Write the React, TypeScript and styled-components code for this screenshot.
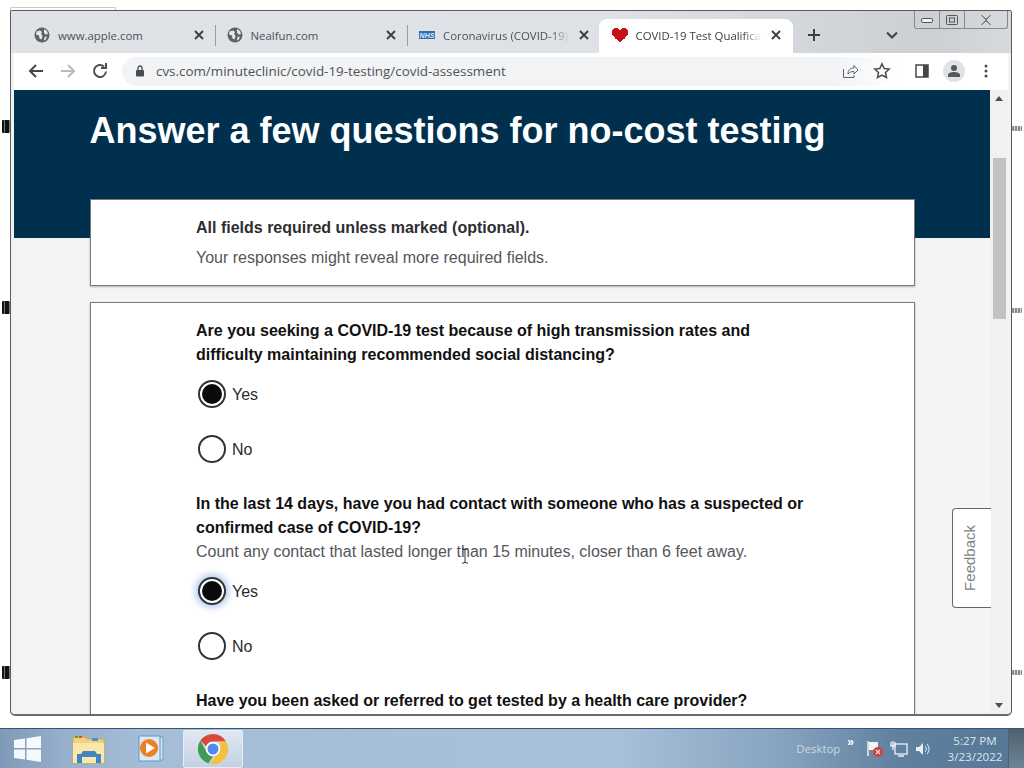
import React from "react";
import styled, { createGlobalStyle } from "styled-components";

const Global = createGlobalStyle`
  html, body { margin: 0; padding: 0; background: #fff; overflow: hidden; }
  #root { width: 1024px; height: 768px; }
`;

const Desktop = styled.div`
  position: relative; width: 1024px; height: 768px; display: flex; flex-direction: column;
  background: #fff; overflow: hidden; font-family: "Liberation Sans", Arial, sans-serif;
`;
const BrowserWindow = styled.div`
  position: relative; margin: 10px 0 0 10px; width: 1002px; height: 706px; box-sizing: border-box;
  display: flex; flex-direction: column; background: #f0f1f3;
  border: 1px solid #5a5a5c; border-bottom: 2px solid #6a6a6c; border-radius: 2px 3px 5px 5px; overflow: hidden;
`;
const GhostTab = styled.div`
  position: absolute; left: 10px; top: 7px; width: 106px; height: 4px; box-sizing: border-box;
  border: 1px solid #c8c8c8; border-bottom: 0; border-radius: 2px 2px 0 0;
`;
const TabStrip = styled.div`
  height: 42px; flex: none; display: flex; align-items: flex-end; padding-left: 12px;
  background: linear-gradient(90deg, #dfe2e7 0%, #dee1e6 60%, #ccd0d5 92%, #d6d9dd 100%);
`;
const Tab = styled.div<{ $active?: boolean; $sep?: boolean }>`
  position: relative; width: ${p => (p.$active ? 194.5 : 192.5)}px; height: 34px; box-sizing: border-box; flex: none;
  display: flex; align-items: center; gap: 8px; padding: 0 11px 2px ${p => (p.$active ? 13 : 11)}px;
  margin-left: ${p => (p.$active ? -2 : 0)}px;
  font-family: "Open Sans", sans-serif; font-size: 11.4px; color: ${p => (p.$active ? "#3c4043" : "#4f5256")};
  background: ${p => (p.$active ? "#fff" : "transparent")};
  border-radius: 8px 8px 0 0;
  &::after {
    content: ""; display: ${p => (p.$sep ? "block" : "none")};
    position: absolute; right: 0; top: 6px; height: 21px; width: 1px; background: #9a9da1;
  }
`;
const TabTitle = styled.span<{ $fade?: boolean }>`
  flex: 1; min-width: 0; overflow: hidden; white-space: nowrap;
  ${p => p.$fade && "mask-image: linear-gradient(90deg, #000 85%, transparent 100%);"}
`;
const IconBox = styled.span`
  display: inline-flex; flex: none; align-items: center; justify-content: center;
`;
const NewTab = styled(IconBox)`
  margin: 0 0 9px 12px; width: 18px; height: 18px;
`;
const TabMenu = styled(IconBox)`
  margin: 0 0 9px 60px; width: 18px; height: 18px;
`;
const WindowButtons = styled.div`
  position: absolute; right: 3px; top: 0; height: 17px; display: flex;
  border: 1px solid #85888c; border-top: 0; border-radius: 0 0 3px 3px;
`;
const WindowButton = styled.span<{ $w: number }>`
  width: ${p => p.$w}px; display: flex; align-items: center; justify-content: center;
  & + & { border-left: 1px solid #85888c; }
`;
const Toolbar = styled.div`
  height: 37px; flex: none; display: flex; align-items: center; background: #fff;
  padding: 0 0 1px 13px; margin: 0 3px; box-sizing: border-box;
`;
const NavButton = styled(IconBox)`
  width: 18px; height: 18px; margin-right: 14px;
`;
const Omnibox = styled.div`
  margin-left: -1px; width: 791px; height: 29px; box-sizing: border-box; display: flex; align-items: center;
  padding-left: 13px; gap: 11px; border-radius: 15px 0 0 15px;
  background: linear-gradient(90deg, #f1f3f4 0%, #f1f3f4 90%, #fff 98%);
  font-family: "Open Sans", sans-serif; font-size: 13.4px; color: #4f5256;
`;
const OmniboxEnd = styled.div`
  margin-left: auto; display: flex; align-items: center; padding-right: 8px;
`;
const OmniAction = styled(IconBox)`
  width: 18px; height: 18px; margin-right: 14px;
`;
const Avatar = styled.span`
  width: 22px; height: 22px; border-radius: 50%; background: #e0e2e6; display: flex;
  align-items: center; justify-content: center; margin-right: 19px; margin-left: -2px;
`;
const Body = styled.div`
  flex: 1; min-height: 0; display: flex; margin: 0 3px;
`;
const Viewport = styled.div`
  flex: 1; min-width: 0; overflow: hidden; box-sizing: border-box; padding: 19px 75px 0 76px;
  background: linear-gradient(#00304e 148px, #f4f4f5 148px);
`;
const Heading = styled.h1`
  margin: 0 0 46px -0.5px; font-size: 36px; line-height: 44px; font-weight: 700; color: #fff;
  white-space: nowrap;
`;
const Card = styled.section`
  box-sizing: border-box; background: #fff; border: 1px solid #77797b;
  box-shadow: 0 1px 2px rgba(0,0,0,.28); padding: 16px 105px;
`;
const IntroCard = styled(Card)`
  margin-bottom: 16px; height: 87px;
`;
const StrongLine = styled.p`
  margin: 0 0 6px; font-size: 16px; line-height: 24px; font-weight: 700; color: #2e2e30;
`;
const HelpLine = styled.p`
  margin: 0; font-size: 16px; line-height: 24px; color: #55565a;
`;
const Question = styled.h2`
  margin: 0; font-size: 16px; line-height: 24px; font-weight: 700; color: #111; max-width: 640px;
`;
const FinalQuestion = styled(Question)`
  margin-top: 2px;
`;
const Options = styled.div`
  display: flex; flex-direction: column; gap: 27px; margin: 13px 0 29px;
`;
const Option = styled.div`
  height: 28px; display: flex; align-items: center; gap: 6px; font-size: 16px; color: #2b2b2d; padding-left: 2px;
`;
const OptionLabel = styled.span`
  padding-top: 1px;
`;
const Radio = styled.span<{ $on?: boolean; $focus?: boolean }>`
  box-sizing: border-box; width: 28px; height: 28px; border-radius: 50%; border: 2px solid #333; background: #fff;
  display: flex; align-items: center; justify-content: center; flex: none;
  ${p => p.$focus && "box-shadow: 0 0 6px 3px rgba(90,140,230,.45);"}
  &::after {
    content: ""; width: 20px; height: 20px; border-radius: 50%;
    background: ${p => (p.$on ? "#0b0b0d" : "transparent")};
  }
`;
const Scrollbar = styled.div`
  width: 18px; flex: none; background: #f1f1f2; display: flex; flex-direction: column; align-items: center;
  padding-top: 68px; position: relative; box-sizing: border-box;
`;
const Thumb = styled.div`
  width: 13px; height: 161px; background: #c1c2c2;
`;
const Arrow = styled.span<{ $down?: boolean }>`
  position: absolute; left: 5px; width: 0; height: 0; border-left: 4px solid transparent; border-right: 4px solid transparent;
  ${p => p.$down ? "bottom: 6px; border-top: 5px solid #505050;" : "top: 6px; border-bottom: 5px solid #505050;"}
`;
const Feedback = styled.div`
  position: absolute; left: 941px; top: 497px; width: 39px; height: 100px; box-sizing: border-box;
  background: #fff; border: 1px solid #666; border-right: 0; border-radius: 4px 0 0 4px;
  display: flex; align-items: center; justify-content: center;
  writing-mode: vertical-rl; font-size: 15px; color: #828385;
  span { transform: rotate(180deg) translateX(3px); }
`;
const TextCursor = styled.svg`
  position: absolute; left: 450px; top: 537px;
`;
const Handle = styled.span<{ $x: number; $y: number; $dark?: boolean }>`
  position: absolute; left: ${p => p.$x}px; top: ${p => p.$y}px; width: ${p => (p.$dark ? 8 : 10)}px; height: ${p => (p.$dark ? 13 : 5)}px;
  border-radius: 1px; background: ${p => (p.$dark ? "repeating-linear-gradient(90deg,#111 0 2px,#777 2px 3px,#111 3px 5px)" : "repeating-linear-gradient(90deg,#8a8a8a 0 2px,#d8d8d8 2px 3px)")};
`;
const Taskbar = styled.div`
  margin-top: auto; height: 40px; flex: none; display: flex; align-items: center; box-sizing: border-box;
  border-top: 1px solid #35546f;
  background: linear-gradient(90deg, #7f99b6 0%, #95aecb 6%, #a6bdd8 14%, #a9c0da 60%, #88a4c0 76%, #5f809f 88%, #557794 100%);
`;
const StartButton = styled(IconBox)`
  margin-left: 13px; width: 28px; height: 27px;
`;
const TaskIcon = styled(IconBox)<{ $ml: number }>`
  margin-left: ${p => p.$ml}px; width: 34px; height: 32px;
`;
const ActiveTask = styled(IconBox)`
  margin-left: 15px; width: 60px; height: 38px; box-sizing: border-box; border: 1px solid #e6edf5; border-radius: 2px;
  background: linear-gradient(180deg, #e0e8f2, #c3d1e2);
`;
const Tray = styled.div`
  margin-left: auto; display: flex; align-items: center; height: 100%; color: #dfe8f0;
`;
const DesktopLabel = styled.span`
  font-family: "Open Sans", sans-serif; font-size: 11.4px; color: #cbd7e2; margin-right: 7px; margin-top: -1px;
`;
const Chevrons = styled.span`
  font-family: "Liberation Sans", sans-serif; font-weight: 700; font-size: 12px; color: #fff; margin-right: 12px; margin-top: -14px;
`;
const TrayIcon = styled(IconBox)`
  width: 18px; height: 18px; margin-right: 6px;
`;
const Clock = styled.div`
  width: 66px; margin: 1px 0 0 4px; text-align: center; font-family: "Open Sans", sans-serif; font-size: 11.6px; line-height: 16px; color: #dbe5ee;
`;
const ShowDesktop = styled.div`
  width: 15px; height: 100%; border-left: 1px solid #45627c;
  background: linear-gradient(180deg, #50606c, #6e8496);
`;

const Globe = () => (
  <svg width="16" height="16" viewBox="0 0 16 16">
    <circle cx="8" cy="8" r="7.5" fill="#5f6368" />
    <path d="M2.5 4.5 6 3.5l2 1.5-1 2 1.5 2-1 3.5-2-1-.5-3L2 7.5zM10 2l3 2 1 3-2.500 .5-1.500-2zM10.500 10l2.500-.5-1.500 3.500-1.500 .5z" fill="#e6e8eb" />
  </svg>
);
const Close = () => (
  <svg width="12" height="12" viewBox="0 0 12 12">
    <path d="M2 2l8 8M10 2l-8 8" stroke="#3c4043" strokeWidth="1.900" />
  </svg>
);
const NhsLogo = () => (
  <svg width="16" height="16" viewBox="0 0 16 16">
    <rect x="0" y="4" width="16" height="8" fill="#2f6db5" />
    <text x="8" y="10.600" fontSize="7" fontWeight="700" fontStyle="italic" textAnchor="middle" fill="#dfeaf6" fontFamily="Liberation Sans">NHS</text>
  </svg>
);
const Heart = () => (
  <svg width="16" height="14" viewBox="1 2 14 12" preserveAspectRatio="none" shapeRendering="crispEdges">
    <path d="M3 2h3v1h1v1h2V3h1V2h3v1h1v1h1v4h-1v1h-1v1h-1v1h-1v1h-1v1H9v1H7v-1H6v-1H5v-1H4v-1H3V9H2V8H1V4h1V3h1z" fill="#c8101a" />
  </svg>
);
const Line = ({ d, color = "#5f6368", w = 2, size = 18 }: { d: string; color?: string; w?: number; size?: number }) => (
  <svg width={size} height={size} viewBox="0 0 18 18" fill="none">
    <path d={d} stroke={color} strokeWidth={w} />
  </svg>
);
const Chrome = () => (
  <svg width="32" height="32" viewBox="0 0 32 32">
    <path d="M16 1a15 15 0 0 1 13 7.500H16a7.500 7.500 0 0 0-7 4.800L3.500 7.500A15 15 0 0 1 16 1z" fill="#d8483b" />
    <path d="M3.500 7.500 9.800 19.500a7.500 7.500 0 0 0 6.200 4L11.500 30.300A15 15 0 0 1 3.500 7.500z" fill="#3f9a52" />
    <path d="M29 8.500A15 15 0 0 1 13 30.800l5.500-8A7.500 7.500 0 0 0 23 16a7.500 7.500 0 0 0-1.500-7.500z" fill="#f2c23e" />
    <circle cx="16" cy="16" r="7" fill="#fff" />
    <circle cx="16" cy="16" r="5.500" fill="#4f8bee" />
  </svg>
);

const tabsData = [
  { title: "www.apple.com", icon: <Globe />, sep: true },
  { title: "Nealfun.com", icon: <Globe />, sep: true },
  { title: "Coronavirus (COVID-19)", icon: <NhsLogo />, fade: true },
  { title: "COVID-19 Test Qualification", icon: <Heart />, active: true, fade: true },
];

const Group = ({ q, hint, focus }: { q: string; hint?: string; focus?: boolean }) => (
  <>
    <Question>{q}</Question>
    {hint && <HelpLine>{hint}</HelpLine>}
    <Options>
      <Option><Radio $on $focus={focus} /><OptionLabel>Yes</OptionLabel></Option>
      <Option><Radio /><OptionLabel>No</OptionLabel></Option>
    </Options>
  </>
);

export default function App() {
  return (
    <Desktop>
      <Global />
      <GhostTab />
      <BrowserWindow>
        <TabStrip>
          {tabsData.map(t => (
            <Tab key={t.title} $active={t.active} $sep={t.sep}>
              <IconBox>{t.icon}</IconBox>
              <TabTitle $fade={t.fade}>{t.title}</TabTitle>
              <IconBox><Close /></IconBox>
            </Tab>
          ))}
          <NewTab><Line d="M9 3v12M3 9h12" color="#3c4043" /></NewTab>
          <TabMenu><Line d="M4 6.500l5 5 5-5" color="#3c4043" /></TabMenu>
        </TabStrip>
        <WindowButtons>
          <WindowButton $w={24}>
            <svg width="12" height="8" viewBox="0 0 12 8"><rect x=".5" y="2.500" width="11" height="4" rx="1.500" fill="#f3f4f6" stroke="#555" /></svg>
          </WindowButton>
          <WindowButton $w={24}>
            <svg width="12" height="10" viewBox="0 0 12 10"><rect x=".5" y=".5" width="11" height="9" rx="1" fill="none" stroke="#555" /><rect x="3.500" y="3" width="5" height="4" fill="none" stroke="#555" /></svg>
          </WindowButton>
          <WindowButton $w={42}>
            <svg width="12" height="10" viewBox="0 0 12 10"><path d="M1 0l5 4 5-4M1 10l5-4 5 4M1 0l10 10M11 0L1 10" fill="none" stroke="#777" /></svg>
          </WindowButton>
        </WindowButtons>
        <Toolbar>
          <NavButton><Line d="M16 9H3M9 3L3 9l6 6" color="#44474a" /></NavButton>
          <NavButton><Line d="M2 9h13M9 3l6 6-6 6" color="#b8babd" /></NavButton>
          <NavButton><Line d="M15 9.500A6 6 0 1 1 13 4.500M10 6h5V1" color="#4b4e51" /></NavButton>
          <Omnibox>
            <svg width="10" height="12" viewBox="0 0 10 12"><rect x="1" y="5" width="8" height="6.500" rx="1" fill="#4a4d50" /><path d="M3 5V3a2 2 0 0 1 4 0v2" fill="none" stroke="#4a4d50" strokeWidth="1.300" /></svg>
            <span>cvs.com/minuteclinic/covid-19-testing/covid-assessment</span>
            <OmniboxEnd>
              <OmniAction><Line d="M2.500 7v8.500h10.500V13M7 12c0-4 2.500-6 6-6V3.500l4 4.500-4 4V9.500c-3 0-4.500 .8-6 2.500z" w={1} color="#5f6368" /></OmniAction>
              <OmniAction><Line d="M9 1.800l2.200 4.700 5 .6-3.700 3.400 1 5L9 13l-4.500 2.500 1-5L1.800 7.100l5-.6z" w={1.500} color="#4a4d50" /></OmniAction>
            </OmniboxEnd>
          </Omnibox>
          <OmniAction>
            <svg width="14" height="14" viewBox="0 0 14 14"><rect x="1" y="1" width="12" height="12" fill="none" stroke="#44474a" strokeWidth="1.500" /><rect x="8" y="1" width="5" height="12" fill="#44474a" /></svg>
          </OmniAction>
          <Avatar>
            <svg width="14" height="14" viewBox="0 0 14 14"><circle cx="7" cy="4" r="3" fill="#55585c" /><path d="M1 13v-2c0-2 3-3 6-3s6 1 6 3v2z" fill="#55585c" /></svg>
          </Avatar>
          <IconBox>
            <svg width="4" height="14" viewBox="0 0 4 14"><circle cx="2" cy="2" r="1.500" fill="#4a4d50" /><circle cx="2" cy="7" r="1.500" fill="#4a4d50" /><circle cx="2" cy="12" r="1.500" fill="#4a4d50" /></svg>
          </IconBox>
        </Toolbar>
        <Body>
          <Viewport>
            <Heading>Answer a few questions for no-cost testing</Heading>
            <IntroCard>
              <StrongLine>All fields required unless marked (optional).</StrongLine>
              <HelpLine>Your responses might reveal more required fields.</HelpLine>
            </IntroCard>
            <Card>
              <Group q="Are you seeking a COVID-19 test because of high transmission rates and difficulty maintaining recommended social distancing?" />
              <Group focus q="In the last 14 days, have you had contact with someone who has a suspected or confirmed case of COVID-19?" hint="Count any contact that lasted longer than 15 minutes, closer than 6 feet away." />
              <FinalQuestion>Have you been asked or referred to get tested by a health care provider?</FinalQuestion>
            </Card>
          </Viewport>
          <Scrollbar>
            <Arrow />
            <Thumb />
            <Arrow $down />
          </Scrollbar>
        </Body>
        <Feedback><span>Feedback</span></Feedback>
        <TextCursor width="8" height="16" viewBox="0 0 8 16">
          <path d="M1 1h2l1 1 1-1h2M4 2v12M1 15h2l1-1 1 1h2" fill="none" stroke="#333" />
        </TextCursor>
      </BrowserWindow>
      <Handle $dark $x={2} $y={120} />
      <Handle $dark $x={2} $y={301} />
      <Handle $dark $x={2} $y={666} />
      <Handle $x={1012} $y={126} />
      <Handle $x={1012} $y={308} />
      <Handle $x={1012} $y={670} />
      <Taskbar>
        <StartButton>
          <svg width="27" height="26" viewBox="0 0 27 26"><path d="M0 4l11-1.600V12H0zM12.500 2.200 27 0v12H12.500zM0 13.500h11v10L0 22zM12.500 13.500H27V26L12.500 23.800z" fill="#f6f9fc" /></svg>
        </StartButton>
        <TaskIcon $ml={31}>
          <svg width="34" height="30" viewBox="0 0 34 30">
            <path d="M1 3h12l2 2h17v24H1z" fill="#f3d27a" stroke="#c9a95a" />
            <rect x="3" y="2" width="3" height="2" fill="#3ea84c" /><rect x="7" y="2" width="3" height="2" fill="#d9493b" /><rect x="20" y="4" width="6" height="3" fill="#4a8fd0" />
            <path d="M1 9h31v20H1z" fill="#f9e7ac" />
            <path d="M5 29V20h4l2-3h12l2 3h4v9h-5v-6H10v6z" fill="#3f87c4" />
          </svg>
        </TaskIcon>
        <TaskIcon $ml={28}>
          <svg width="28" height="28" viewBox="0 0 28 28">
            <rect x="6" y="2" width="20" height="23" fill="#cfe2f3" stroke="#6fa1cc" />
            <rect x="2" y="1" width="21" height="25" fill="#dbe9f6" stroke="#5f96c8" />
            <circle cx="12" cy="13" r="9" fill="#ee7f1e" />
            <path d="M9 7.500l9 5.500-9 5.500z" fill="#fff" />
          </svg>
        </TaskIcon>
        <ActiveTask><Chrome /></ActiveTask>
        <Tray>
          <DesktopLabel>Desktop</DesktopLabel>
          <Chevrons>»</Chevrons>
          <TrayIcon>
            <svg width="18" height="18" viewBox="0 0 18 18"><path d="M2 1v15" stroke="#f2f2f2" strokeWidth="1.500" /><path d="M3 2h9v8H3z" fill="#f4f4f4" /><circle cx="12" cy="12" r="5" fill="#c9443e" /><path d="M10 10l4 4M14 10l-4 4" stroke="#f8d8d8" strokeWidth="1.300" /></svg>
          </TrayIcon>
          <TrayIcon>
            <svg width="18" height="18" viewBox="0 0 18 18" fill="none"><rect x="5" y="4" width="12" height="10" stroke="#eef2f5" strokeWidth="1.300" /><path d="M3 1v9M1 2v4h4V2M8 16h6" stroke="#eef2f5" strokeWidth="1.300" /></svg>
          </TrayIcon>
          <TrayIcon>
            <svg width="18" height="18" viewBox="0 0 18 18" fill="none"><path d="M2 7h3l4-4v12l-4-4H2z" fill="#e8edf2" /><path d="M11 6a4 4 0 0 1 0 6M13 4a7 7 0 0 1 0 10" stroke="#e8edf2" /></svg>
          </TrayIcon>
          <Clock>5:27 PM<br />3/23/2022</Clock>
          <ShowDesktop />
        </Tray>
      </Taskbar>
    </Desktop>
  );
}
